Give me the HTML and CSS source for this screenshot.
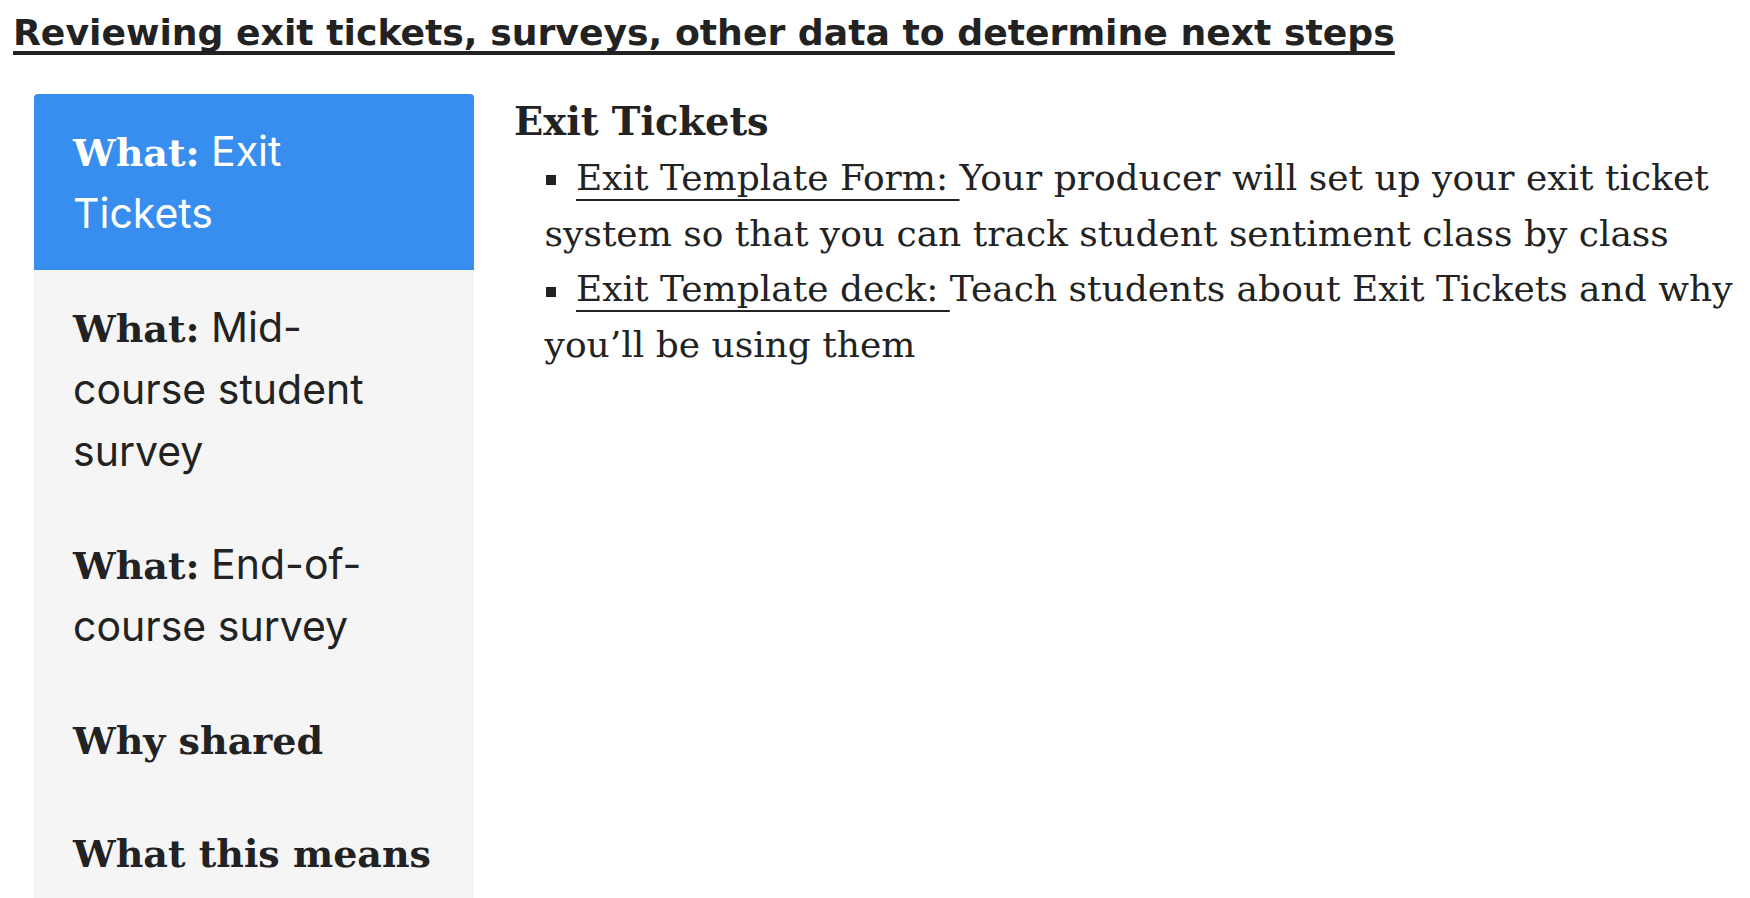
FILE: index.html
```html
<!DOCTYPE html>
<html lang="en">
<head>
<meta charset="utf-8">
<title>Reviewing exit tickets</title>
<link rel="stylesheet" href="styles.css">
</head>
<body>
<h1 class="page-title">Reviewing exit tickets, surveys, other data to determine next steps</h1>
<div class="layout">
  <nav class="tabs">
    <div class="tab tab-active"><strong class="tab-key">What:</strong> Exit<br>Tickets</div>
    <div class="tab"><strong class="tab-key">What:</strong> Mid-<br>course student<br>survey</div>
    <div class="tab"><strong class="tab-key">What:</strong> End-of-<br>course survey</div>
    <div class="tab"><strong class="tab-key">Why shared</strong></div>
    <div class="tab"><strong class="tab-key">What this means</strong></div>
  </nav>
  <section class="content">
    <h2 class="content-title">Exit Tickets</h2>
    <ul class="links">
      <li class="link-item"><a class="link" href="#">Exit Template Form: </a><span class="link-desc">Your producer will set up your exit ticket system so that you can track student sentiment class by class</span></li>
      <li class="link-item"><a class="link" href="#">Exit Template deck: </a><span class="link-desc">Teach students about Exit Tickets and why you’ll be using them</span></li>
    </ul>
  </section>
</div>
</body>
</html>
```
FILE: styles.css
```css
html, body {
  margin: 0;
  padding: 0;
  background: #ffffff;
}
body {
  font-family: "DejaVu Serif", serif;
  color: #222222;
}
.page-title {
  margin: 0;
  padding: 12px 13px 0;
  font-family: "DejaVu Sans", sans-serif;
  font-weight: bold;
  font-size: 36.2px;
  line-height: 42px;
  text-decoration: underline;
  text-decoration-thickness: 4px;
  text-underline-offset: 6px;
  text-decoration-skip-ink: none;
  white-space: nowrap;
}
.layout {
  display: flex;
  align-items: flex-start;
  gap: 40px;
  margin-top: 40px;
  padding-left: 34px;
}
.tabs {
  flex: none;
  width: 440px;
  background: #f5f5f5;
  border-radius: 4px 4px 0 0;
}
.tab {
  padding: 26px 20px 25px 39px;
  font-family: "Inter", sans-serif;
  font-size: 41px;
  line-height: 62px;
  color: #222222;
  white-space: nowrap;
}
.tab-active {
  padding-bottom: 26px;
  background: #388eef;
  color: #ffffff;
  border-radius: 4px 4px 0 0;
}
.tab-key {
  font-family: "DejaVu Serif", serif;
  font-weight: bold;
  font-size: 38px;
  line-height: 1;
}
.content {
  flex: 1;
  min-width: 0;
  padding-right: 4px;
}
.content-title {
  margin: 0;
  font-family: "DejaVu Serif", serif;
  font-weight: bold;
  font-size: 38.4px;
  line-height: 55.8px;
}
.links {
  margin: 0;
  padding: 0 0 0 30.6px;
  list-style: none;
}
.link-item {
  font-size: 36px;
  line-height: 55.8px;
}
.link-item::before {
  content: "";
  display: inline-block;
  width: 10px;
  height: 10px;
  margin: 0 20px 0 1.4px;
  background: #222222;
  vertical-align: 4.7px;
}
.link {
  color: #222222;
  text-decoration: underline;
  text-decoration-thickness: 2px;
  text-underline-offset: 9px;
  text-decoration-skip-ink: none;
}
```
